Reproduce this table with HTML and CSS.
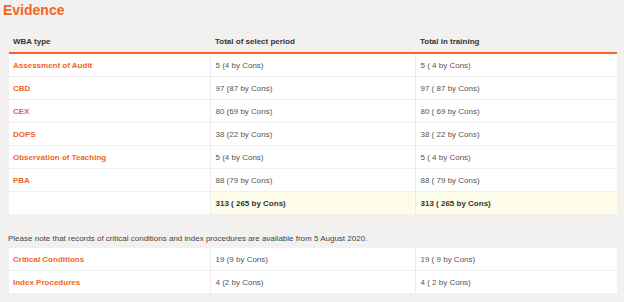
FILE: index.html
```html
<!DOCTYPE html>
<html>
<head>
<meta charset="utf-8">
<link rel="stylesheet" href="styles.css">
</head>
<body>
<h2 class="title">Evidence</h2>
<table class="grid">
  <colgroup><col class="c1"><col class="c2"><col class="c3"></colgroup>
  <thead>
    <tr><th>WBA type</th><th>Total of select period</th><th>Total in training</th></tr>
  </thead>
  <tbody>
    <tr><td class="name">Assessment of Audit</td><td>5 (4 by Cons)</td><td>5 ( 4 by Cons)</td></tr>
    <tr><td class="name">CBD</td><td>97 (87 by Cons)</td><td>97 ( 87 by Cons)</td></tr>
    <tr><td class="name">CEX</td><td>80 (69 by Cons)</td><td>80 ( 69 by Cons)</td></tr>
    <tr><td class="name">DOPS</td><td>38 (22 by Cons)</td><td>38 ( 22 by Cons)</td></tr>
    <tr><td class="name">Observation of Teaching</td><td>5 (4 by Cons)</td><td>5 ( 4 by Cons)</td></tr>
    <tr><td class="name">PBA</td><td>88 (79 by Cons)</td><td>88 ( 79 by Cons)</td></tr>
    <tr class="total"><td></td><td>313 ( 265 by Cons)</td><td>313 ( 265 by Cons)</td></tr>
  </tbody>
</table>
<p class="note">Please note that records of critical conditions and index procedures are available from 5 August 2020.</p>
<table class="grid">
  <colgroup><col class="c1"><col class="c2"><col class="c3"></colgroup>
  <tbody>
    <tr><td class="name">Critical Conditions</td><td>19 (9 by Cons)</td><td>19 ( 9 by Cons)</td></tr>
    <tr><td class="name">Index Procedures</td><td>4 (2 by Cons)</td><td>4 ( 2 by Cons)</td></tr>
  </tbody>
</table>
</body>
</html>
```
FILE: styles.css
```css
html, body {
  margin: 0;
  padding: 0;
  background: #f2f1ef;
  font-family: "Liberation Sans", Arial, sans-serif;
  color: #555;
}
.title {
  margin: 0;
  padding: 2px 0 0 3px;
  font-size: 14px;
  line-height: 17px;
  font-weight: bold;
  color: #f26522;
}
.grid {
  margin: 0 0 0 9px;
  width: 608px;
  border-collapse: collapse;
  table-layout: fixed;
  font-size: 8px;
}
.c1 { width: 201px; }
.c2 { width: 205px; }
.c3 { width: 202px; }
.grid thead th {
  text-align: left;
  font-weight: bold;
  color: #333;
  height: 22px;
  padding: 0 4px;
  vertical-align: middle;
  border-bottom: 2px solid #f26522;
}
.grid thead {
  border-top: 11px solid transparent;
}
.grid th:nth-child(n+2), .grid td:nth-child(n+2) {
  padding-left: 5px;
}
.grid td {
  background: #fff;
  height: 22px;
  padding: 0 4px;
  vertical-align: middle;
  border-bottom: 1px solid #efefef;
  border-left: 1px solid #ececec;
  white-space: nowrap;
}
.grid td:first-child { border-left: none; }
.grid tr:last-child td { border-bottom: none; }
.grid td.name {
  color: #f26522;
  font-weight: bold;
}
.total td {
  font-weight: bold;
  color: #333;
}
.total td:nth-child(n+2) {
  background: #fdfde9;
}
.note {
  margin: 19px 0 3px 8px;
  font-size: 8px;
  line-height: 12px;
  color: #444;
}
```
